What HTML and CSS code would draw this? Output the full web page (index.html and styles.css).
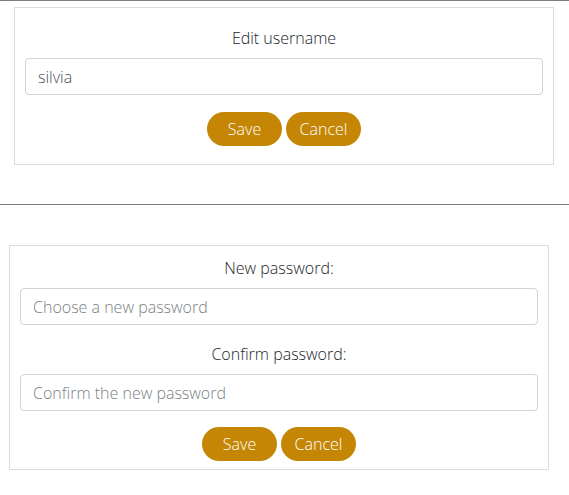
FILE: index.html
```html
<!DOCTYPE html>
<html>
<head>
<meta charset="utf-8">
<link rel="stylesheet" href="styles.css">
</head>
<body>
<hr class="rule rule-top">
<form class="card card-user">
  <div class="title">Edit username</div>
  <input class="field" type="text" value="silvia">
  <div class="actions">
    <button type="button" class="btn">Save</button>
    <button type="button" class="btn">Cancel</button>
  </div>
</form>
<hr class="rule rule-mid">
<form class="card card-pass">
  <div class="label">New password:</div>
  <input class="field" type="password" placeholder="Choose a new password">
  <div class="label label-gap">Confirm password:</div>
  <input class="field" type="password" placeholder="Confirm the new password">
  <div class="actions">
    <button type="button" class="btn">Save</button>
    <button type="button" class="btn">Cancel</button>
  </div>
</form>
</body>
</html>
```
FILE: styles.css
```css
html, body {
  margin: 0;
  padding: 0;
  background: #fff;
}
body {
  font-family: "Open Sans", "Lato", sans-serif;
  font-weight: 300;
  font-size: 16px;
  color: #212529;
}
.rule {
  border: 0;
  height: 1px;
  background: #7f7f7f;
  margin: 0;
}
.rule-top {
  margin-top: 0;
}
.rule-mid {
  margin-top: 39px;
}
.card {
  box-sizing: border-box;
  width: 540px;
  border: 1px solid #dcdcdc;
  padding: 10px 10px 8px;
  display: flex;
  flex-direction: column;
  text-align: center;
}
.card-user {
  margin: 6px 0 0 14px;
  padding-bottom: 18px;
}
.card-pass {
  margin: 40px 0 0 9px;
}
.title {
  line-height: 24px;
  margin: 8px 0 8px;
}
.label {
  line-height: 24px;
  margin-bottom: 8px;
}
.label-gap {
  margin-top: 17px;
}
.field {
  box-sizing: border-box;
  height: 37px;
  width: 100%;
  border: 1px solid #ced4da;
  border-radius: 4px;
  padding: 0 12px;
  font-family: inherit;
  font-weight: 300;
  font-size: 16px;
  color: #495057;
  background: #fff;
  outline: none;
}
.field::placeholder {
  color: #7a7f85;
}
.actions {
  display: flex;
  justify-content: center;
  gap: 4px;
  margin-top: 17px;
}
.card-pass .actions {
  margin-top: 16px;
}
.btn {
  width: 75px;
  height: 34px;
  border: 0;
  border-radius: 17px;
  background: #c48604;
  color: #fff;
  font-family: inherit;
  font-weight: 300;
  font-size: 16px;
  padding: 0;
}
```
